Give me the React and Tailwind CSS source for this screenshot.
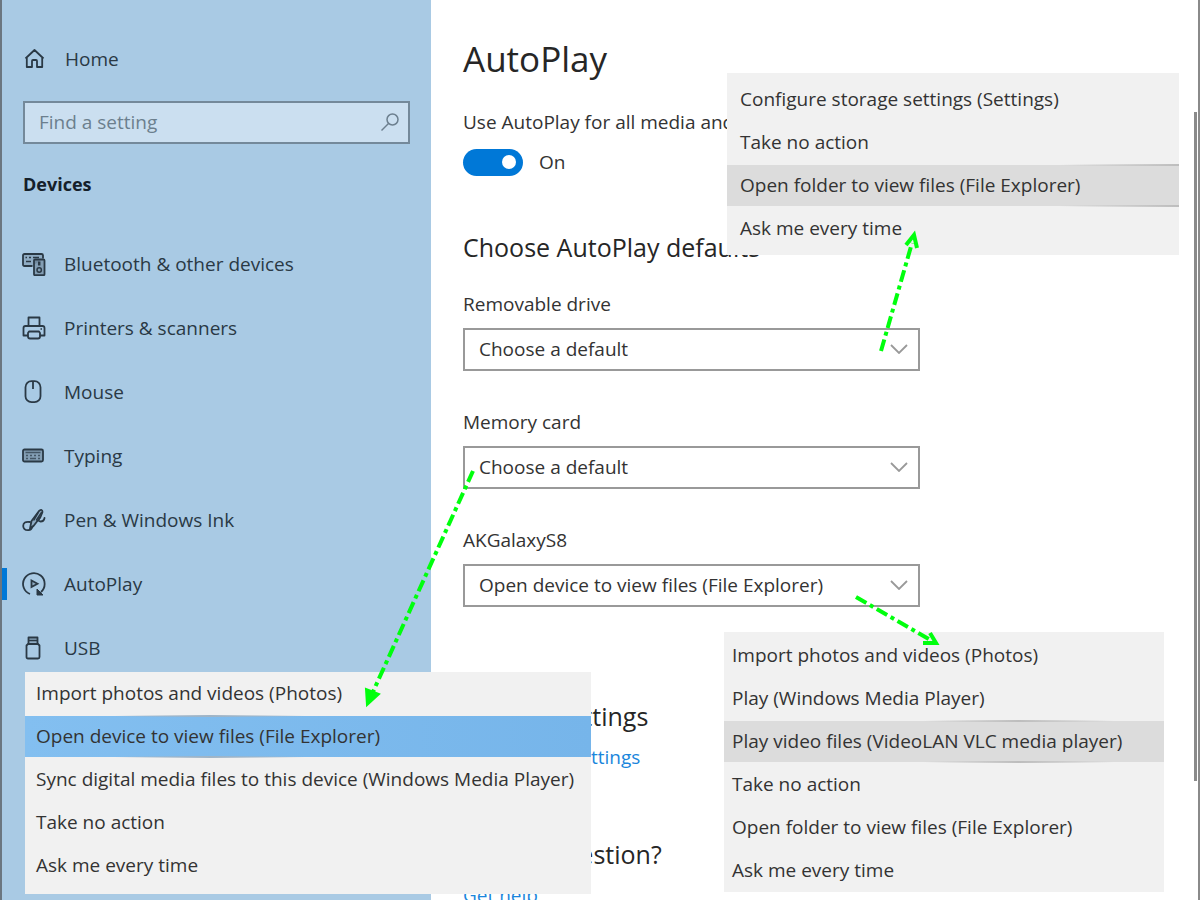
import React, { useState } from 'react';

const HomeIcon = () => (
  <svg viewBox="0 0 24 24" className="h-6 w-6" fill="none" stroke="currentColor" strokeWidth="1.800" strokeLinejoin="round">
    <path d="M3.500 11.500 12.500 3 21.500 11.500M4.800 10.500V20H10V14Q10 13 11 13H14Q15 13 15 14V20H20.200V10.500" />
  </svg>
);

const DevicesIcon = () => (
  <svg viewBox="0 0 24 24" className="h-6 w-6" fill="none" stroke="currentColor" strokeWidth="1.800">
    <path d="M10.500 14H2.500Q1 14 1 12.500V3.500Q1 2 2.500 2H19.500Q21 2 21 3.500V6.500" fill="currentColor" fillOpacity="0.2" />
    <path d="M3.500 5.500h1.500M7 5.500h2M11 5.500h6M4 9.500h5" strokeWidth="1.500" />
    <rect x="12" y="7.500" width="10.500" height="15.700" rx="1" fill="currentColor" fillOpacity="0.3" />
    <circle cx="17.200" cy="18" r="2.200" strokeWidth="1.500" />
    <path d="M17.200 9.500v4" strokeWidth="2.500" />
  </svg>
);

const PrinterIcon = () => (
  <svg viewBox="0 0 24 24" className="h-6 w-6" fill="none" stroke="currentColor" strokeWidth="1.800" strokeLinejoin="round">
    <path d="M6.500 10V1.500H17.500V10" />
    <path d="M6 19.500H1.500V12Q1.500 10 3.500 10H20.500Q22.500 10 22.500 12V19.500H18" />
    <path d="M7 15.500H17L18 17V20.500Q18 22.500 16 22.500H8Q6 22.500 6 20.500V17Z" />
    <path d="M18.500 13h1.500" strokeWidth="1.500" />
  </svg>
);

const MouseIcon = () => (
  <svg viewBox="0 0 24 24" className="h-6 w-6" fill="none" stroke="currentColor" strokeWidth="1.800">
    <rect x="3.500" y="1.200" width="15" height="21" rx="6" />
    <path d="M11 1.500V9" />
  </svg>
);

const KeyboardIcon = () => (
  <svg viewBox="0 0 24 24" className="h-6 w-6" fill="none" stroke="currentColor" strokeWidth="1.800">
    <rect x="1" y="5.500" width="20" height="12" rx="1.500" fill="currentColor" fillOpacity="0.3" />
    <path d="M3.500 8.500h15M4 11.500h2M8 11.500h2M12 11.500h2M16 11.500h2M4 14.500h2M8 14.500h6M16 14.500h2" strokeWidth="1.500" strokeOpacity="0.7" />
  </svg>
);

const PenIcon = () => (
  <svg viewBox="0 0 24 24" className="h-6 w-6" fill="none" stroke="currentColor" strokeWidth="1.800" strokeLinejoin="round" strokeLinecap="round">
    <path d="M8 20.500 9.500 13 17 3Q20.500.5 20.500 4L18.500 9 11.500 18Z" fill="currentColor" fillOpacity="0.2" />
    <path d="M16 5 12 12M19.500 4.500 14.500 12" strokeWidth="1.500" />
    <path d="M8 14Q1.200 13 1.200 18 1.500 22.500 6.500 22.200 9.500 22 10.500 18.500" />
    <path d="M18 9.500Q15 13.500 18.500 13.500 22 13.500 22.500 10" />
  </svg>
);

const AutoPlayIcon = () => (
  <svg viewBox="0 0 24 24" className="h-6 w-6" fill="none" stroke="currentColor" strokeWidth="1.800">
    <path d="M8 22A10.800 10.800 0 1 1 19 20" />
    <path d="M9.500 8.500V15L15.500 11.700Z" fill="currentColor" fillOpacity="0.2" />
    <path d="M15 17V23H21Z" fill="currentColor" strokeWidth="1" />
  </svg>
);

const UsbIcon = () => (
  <svg viewBox="0 0 24 24" className="h-6 w-6" fill="none" stroke="currentColor" strokeWidth="1.800" strokeLinejoin="round">
    <path d="M6.500 8V1.500H15.500V8" fill="currentColor" fillOpacity="0.2" />
    <path d="M7 4.500h8" strokeWidth="1.500" />
    <path d="M6 8H16L17.500 9.500V21Q17.500 22.500 16 22.500H6Q4.500 22.500 4.500 21V9.500Z" />
  </svg>
);

const navItems = [
  { label: 'Bluetooth & other devices', Icon: DevicesIcon },
  { label: 'Printers & scanners', Icon: PrinterIcon },
  { label: 'Mouse', Icon: MouseIcon },
  { label: 'Typing', Icon: KeyboardIcon },
  { label: 'Pen & Windows Ink', Icon: PenIcon },
  { label: 'AutoPlay', Icon: AutoPlayIcon, active: true },
  { label: 'USB', Icon: UsbIcon },
];

const driveOptions = [
  'Configure storage settings (Settings)',
  'Take no action',
  'Open folder to view files (File Explorer)',
  'Ask me every time',
];

const deviceOptions = [
  'Import photos and videos (Photos)',
  'Open device to view files (File Explorer)',
  'Sync digital media files to this device (Windows Media Player)',
  'Take no action',
  'Ask me every time',
];

const cardOptions = [
  'Import photos and videos (Photos)',
  'Play (Windows Media Player)',
  'Play video files (VideoLAN VLC media player)',
  'Take no action',
  'Open folder to view files (File Explorer)',
  'Ask me every time',
];

function Sidebar() {
  return (
    <aside className="flex w-[431px] shrink-0 flex-col border-l-2 border-[#6b7680] bg-[#a9cae4] text-[#2a3945]">
      <a href="#home" className="mt-[39px] flex h-10 items-center gap-[19px] pl-5">
        <HomeIcon />
        Home
      </a>

      <label className="mt-[22px] mr-[21px] ml-[21px] flex h-[43px] items-center border-2 border-[#74899a] bg-[#cbdff0] pr-2 pb-[2px] pl-[14px] text-[#6c7f8e]">
        <input
          type="text"
          aria-label="Find a setting"
          placeholder="Find a setting"
          className="min-w-0 flex-1 bg-transparent outline-none placeholder:text-[#6c7f8e]"
        />
        <svg viewBox="0 0 20 20" className="h-5 w-5" fill="none" stroke="currentColor" strokeWidth="1.500">
          <circle cx="12.500" cy="7.500" r="5.500" />
          <path d="M8.500 11.500 1.500 18.500" />
        </svg>
      </label>

      <h2 className="mt-6 pl-[21px] text-[18px] leading-8 font-bold text-[#15202a]">Devices</h2>

      <nav className="mt-8">
        {navItems.map(({ label, Icon, active }) => (
          <a key={label} href="#" className="flex h-16 items-center">
            <span className={active ? 'h-8 w-[5px] bg-[#0078d7]' : 'h-8 w-[5px]'}></span>
            <span className="mr-[18px] ml-[15px]">
              <Icon />
            </span>
            {label}
          </a>
        ))}
      </nav>
    </aside>
  );
}

function SelectField({ id, label, options, value }) {
  const [current, setCurrent] = useState(value);

  return (
    <div className="max-w-[457px]">
      <label htmlFor={id} className="block leading-7">{label}</label>
      <div className="relative mt-[10px]">
        <select
          id={id}
          value={current}
          onChange={(e) => setCurrent(e.target.value)}
          className="h-[43px] w-full appearance-none border-2 border-[#999999] bg-white pr-12 pb-[2px] pl-[14px] outline-none"
        >
          <option>Choose a default</option>
          {options.map((option) => (
            <option key={option}>{option}</option>
          ))}
        </select>
        <svg viewBox="0 0 18 10" className="pointer-events-none absolute top-4 right-3 h-[10px] w-[18px]" fill="none" stroke="#999999" strokeWidth="1.800">
          <path d="M1 1 9 9 17 1" />
        </svg>
      </div>
    </div>
  );
}

function PopupMenu({ label, items, selected, className, itemClass, selectedClass, lineClass }) {
  return (
    <ul role="listbox" aria-label={label} className={`absolute flex flex-col gap-[2px] bg-[#f1f1f1] ${className}`}>
      {items.map((item, i) => (
        <li
          key={item}
          role="option"
          aria-selected={i === selected}
          className={`relative flex h-[41px] items-center pb-[2px] whitespace-nowrap ${itemClass} ${i === selected ? selectedClass : ''}`}
        >
          {item}
          {i === selected && (
            <>
              <span className={`absolute -top-px h-[2px] ${lineClass}`}></span>
              <span className={`absolute -bottom-px h-[2px] ${lineClass}`}></span>
            </>
          )}
        </li>
      ))}
    </ul>
  );
}

function Arrows() {
  return (
    <svg width="1200" height="900" viewBox="0 0 1200 900" className="pointer-events-none absolute top-0 left-0" fill="none" stroke="#00ff0d" strokeWidth="4">
      <g strokeDasharray="12 4 4 4">
        <path d="M881 351 912 243" />
        <path d="M473 471 372 694" />
        <path d="M856 597 932 641" />
      </g>
      <path d="M906 245 914 235 917 248" />
      <path d="M367 705 366 689 371 691 379 694Z" fill="#00ff0d" strokeWidth="2" />
      <path d="M930 633 936 643 923 643" />
    </svg>
  );
}

function App() {
  const [enabled, setEnabled] = useState(true);

  return (
    <div className="relative flex h-screen overflow-hidden border-r-2 border-[#8a8a8a] bg-white font-['Open_Sans','Noto_Sans',sans-serif] text-[19px] leading-7 text-[#333333]">
      <Sidebar />

      <main className="flex min-w-0 flex-1 flex-col pl-8">
        <h1 className="mt-9 text-[35px] leading-[46px] text-[#262626]">AutoPlay</h1>

        <p className="mt-[26px] whitespace-nowrap">Use AutoPlay for all media and devices</p>
        <label className="mt-3 flex h-7 items-center gap-4">
          <input
            type="checkbox"
            role="switch"
            checked={enabled}
            onChange={(e) => setEnabled(e.target.checked)}
            className="flex h-[27px] w-[60px] appearance-none items-center rounded-full bg-[#999999] px-[7px] before:h-[14px] before:w-[14px] before:rounded-full before:bg-white checked:justify-end checked:bg-[#0078d7]"
          />
          {enabled ? 'On' : 'Off'}
        </label>

        <h2 className="mt-[53px] text-[25px] leading-9 text-[#262626]">Choose AutoPlay defaults</h2>
        <div className="mt-[25px] flex flex-col gap-[37px]">
          <SelectField id="removable" label="Removable drive" options={driveOptions} value="Choose a default" />
          <SelectField id="memory" label="Memory card" options={deviceOptions} value="Choose a default" />
          <SelectField id="galaxy" label="AKGalaxyS8" options={['Open device to view files (File Explorer)', ...cardOptions]} value="Open device to view files (File Explorer)" />
        </div>

        <h2 className="mt-[91px] text-[25px] leading-9 text-[#262626]">Related settings</h2>
        <a href="#defaults" className="mt-[9px] self-start text-[#1a86dc]">Default app settings</a>

        <h2 className="mt-[65px] text-[25px] leading-9 text-[#262626]">Have a question?</h2>
        <a href="#help" className="mt-[9px] self-start text-[#1a86dc]">Get help</a>
      </main>

      <div className="mt-28 mr-px h-[669px] w-[3px] shrink-0 bg-[#8a8a8a]"></div>

      <PopupMenu
        label="Removable drive"
        items={driveOptions}
        selected={2}
        className="top-[73px] left-[727px] w-[452px] py-[6px]"
        itemClass="px-[13px]"
        selectedClass="bg-[#dcdcdc]"
        lineClass="right-0 w-[120px] bg-linear-to-r from-transparent to-[#bdbdbd]"
      />
      <PopupMenu
        label="Memory card"
        items={deviceOptions}
        selected={1}
        className="top-[672px] left-[25px] w-[566px] pt-px pb-2"
        itemClass="px-[11px]"
        selectedClass="bg-linear-to-r from-[#83bff0] to-[#76b5ea]"
        lineClass="left-[90px] w-[190px] bg-linear-to-r from-transparent via-[#9fb4c6] to-transparent"
      />
      <PopupMenu
        label="AKGalaxyS8"
        items={cardOptions}
        selected={2}
        className="top-[632px] left-[724px] w-[440px] pt-[3px] pb-px"
        itemClass="px-2"
        selectedClass="bg-[#dcdcdc]"
        lineClass="left-[200px] w-[190px] bg-linear-to-r from-transparent via-[#bdbdbd] to-transparent"
      />

      <Arrows />
    </div>
  );
}

export default App;
